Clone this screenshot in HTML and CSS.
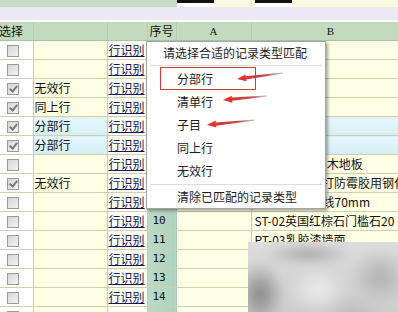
FILE: index.html
```html
<!DOCTYPE html>
<html lang="zh-CN">
<head>
    <meta charset="UTF-8">
    <meta name="viewport" content="width=device-width, initial-scale=1.0">
    <title>记录类型匹配</title>
    <link rel="stylesheet" href="styles.css">
</head>
<body>
    <div class="topbar">
        <div class="tb-green"></div>
        <div class="tb-yellow">
            <span class="tb-box"></span>
            <span class="tb-gap"></span>
            <span class="tb-box"></span>
        </div>
    </div>
    <div class="toolbar"></div>

    <table class="grid">
        <colgroup>
            <col class="c-sel"><col class="c-type"><col class="c-link"><col class="c-no"><col class="c-a"><col class="c-b">
        </colgroup>
        <thead>
            <tr><th class="h-sel">选择</th><th></th><th></th><th>序号</th><th class="h-a">A</th><th class="h-b">B</th></tr>
        </thead>
        <tbody>
            <tr><td class="sel"><span class="cb"></span></td><td class="type"></td><td class="link"><a href="#">行识别</a></td><td class="no">1</td><td class="a"></td><td class="b"></td></tr>
            <tr><td class="sel"><span class="cb"></span></td><td class="type"></td><td class="link"><a href="#">行识别</a></td><td class="no">2</td><td class="a"></td><td class="b"></td></tr>
            <tr><td class="sel"><span class="cb on"></span></td><td class="type">无效行</td><td class="link"><a href="#">行识别</a></td><td class="no">3</td><td class="a"></td><td class="b"></td></tr>
            <tr><td class="sel"><span class="cb on"></span></td><td class="type">同上行</td><td class="link"><a href="#">行识别</a></td><td class="no">4</td><td class="a"></td><td class="b"></td></tr>
            <tr class="part"><td class="sel"><span class="cb on"></span></td><td class="type">分部行</td><td class="link"><a href="#">行识别</a></td><td class="no">5</td><td class="a"></td><td class="b"></td></tr>
            <tr class="part"><td class="sel"><span class="cb on"></span></td><td class="type">分部行</td><td class="link"><a href="#">行识别</a></td><td class="no">6</td><td class="a"></td><td class="b"></td></tr>
            <tr><td class="sel"><span class="cb"></span></td><td class="type"></td><td class="link"><a href="#">行识别</a></td><td class="no">7</td><td class="a"></td><td class="b">WD-01橡木实木地板</td></tr>
            <tr><td class="sel"><span class="cb on"></span></td><td class="type">无效行</td><td class="link"><a href="#">行识别</a></td><td class="no">8</td><td class="a"></td><td class="b">GL-01淋浴间打防霉胶用钢化玻璃</td></tr>
            <tr><td class="sel"><span class="cb"></span></td><td class="type"></td><td class="link"><a href="#">行识别</a></td><td class="no">9</td><td class="a"></td><td class="b">SK-01木踢脚线70mm</td></tr>
            <tr><td class="sel"><span class="cb"></span></td><td class="type"></td><td class="link"><a href="#">行识别</a></td><td class="no">10</td><td class="a"></td><td class="b">ST-02英国红棕石门槛石20</td></tr>
            <tr><td class="sel"><span class="cb"></span></td><td class="type"></td><td class="link"><a href="#">行识别</a></td><td class="no">11</td><td class="a"></td><td class="b">PT-03乳胶漆墙面</td></tr>
            <tr><td class="sel"><span class="cb"></span></td><td class="type"></td><td class="link"><a href="#">行识别</a></td><td class="no">12</td><td class="a"></td><td class="b"></td></tr>
            <tr><td class="sel"><span class="cb"></span></td><td class="type"></td><td class="link"><a href="#">行识别</a></td><td class="no">13</td><td class="a"></td><td class="b"></td></tr>
            <tr><td class="sel"><span class="cb"></span></td><td class="type"></td><td class="link"><a href="#">行识别</a></td><td class="no">14</td><td class="a"></td><td class="b"></td></tr>
            <tr><td class="sel"><span class="cb"></span></td><td class="type"></td><td class="link"></td><td class="no"></td><td class="a"></td><td class="b"></td></tr>
        </tbody>
    </table>

    <!-- popup menu -->
    <div class="menu">
        <div class="menu-title">请选择合适的记录类型匹配</div>
        <div class="menu-sep"></div>
        <div class="menu-item marked"><span class="mark-box"></span>分部行</div>
        <div class="menu-item">清单行</div>
        <div class="menu-item">子目</div>
        <div class="menu-item">同上行</div>
        <div class="menu-item">无效行</div>
        <div class="menu-sep"></div>
        <div class="menu-item last">清除已匹配的记录类型</div>
    </div>

    <svg class="arrows" width="398" height="312" viewBox="0 0 398 312">
        <defs>
            <linearGradient id="shaft" x1="0" y1="0" x2="1" y2="0">
                <stop offset="0" stop-color="#e0302a"/>
                <stop offset="0.55" stop-color="#c44a48"/>
                <stop offset="1" stop-color="#8c8c8c" stop-opacity="0.5"/>
            </linearGradient>
        </defs>
        <polygon points="237,79 246.4,81.3 245.5,74.4" fill="#e3302a"/>
        <polygon points="245.7,76.2 282.9,72.5 283.1,73.5 246.1,79.4" fill="url(#shaft)"/>
        <polygon points="223,100 232.3,102.7 231.7,95.7" fill="#e3302a"/>
        <polygon points="231.9,97.6 266.9,95.5 267.1,96.5 232.1,100.8" fill="url(#shaft)"/>
        <polygon points="207,125 216.4,127.6 215.6,120.6" fill="#e3302a"/>
        <polygon points="215.8,122.5 254.9,119.5 255.1,120.5 216.2,125.7" fill="url(#shaft)"/>
    </svg>

    <div class="smudge"><div class="smudge-in"></div></div>
</body>
</html>
```

FILE: styles.css
```css
body{
    margin: 0;
    width: 398px;
    height: 312px;
    overflow: hidden;
    position: relative;
    background: #ffffe8;
    font-family: "Noto Sans CJK SC", "DejaVu Sans", sans-serif;
    font-size: 12px;
    color: #111;
}

/* top strip */
.topbar{
    display: flex;
    height: 7px;
}
.tb-green{
    width: 177px;
    background: #c6dcc2;
}
.tb-yellow{
    flex: 1;
    display: flex;
    background: #fbf8e2;
}
.tb-box{
    width: 37px;
    border-top: 3px solid #111;
    background: #fff;
}
.tb-gap{
    width: 41px;
}
.toolbar{
    height: 13px;
    background: #ece9f3;
    border-bottom: 2px solid #fbfbfd;
}

/* grid */
.grid{
    border-collapse: collapse;
    table-layout: fixed;
    width: 410px;
}
.c-sel{ width: 33px; }
.c-type{ width: 74px; }
.c-link{ width: 40px; }
.c-no{ width: 29px; }
.c-a{ width: 75px; }
.c-b{ width: 159px; }

.grid th{
    height: 18px;
    padding: 0;
    background: #c2dabe;
    font-weight: normal;
    line-height: 18px;
    border-right: 1px solid #b4ceb0;
    border-bottom: 1px solid #a9c4a5;
    white-space: nowrap;
    overflow: hidden;
}
.grid th.h-sel{
    text-align: left;
    text-indent: -1px;
}
.grid th.h-a, .grid th.h-b{
    font-family: "Liberation Serif", serif;
    font-size: 11px;
}
.grid td{
    height: 18px;
    padding: 0;
    line-height: 18px;
    border-bottom: 1px solid #cfcfae;
    border-right: 1px solid #c9c9b4;
    white-space: nowrap;
    overflow: hidden;
}
.grid td.sel{
    background: #ffffff;
    padding-left: 7px;
}
.grid td.type{
    background: #ffffe4;
    padding-left: 1px;
}
.grid td.link{
    background: #fffff4;
    padding-left: 1px;
}
.grid td.link a{
    color: #14145e;
    text-decoration: underline;
}
.grid td.no{
    background: linear-gradient(90deg, #bcdac8, #afd3be);
    padding-left: 5px;
    font-family: "DejaVu Sans Mono", monospace;
    font-size: 11px;
    border-right-color: #a8c8b4;
}
.grid td.a{
    background: #ffffe6;
}
.grid td.b{
    background: #ffffe6;
    padding-left: 3px;
}
.grid tr.part td.type,
.grid tr.part td.a,
.grid tr.part td.b{
    background: linear-gradient(180deg, #e6f7fc, #d4eff9);
}

/* checkbox */
.cb{
    display: inline-block;
    position: relative;
    width: 10px;
    height: 10px;
    margin-top: 4px;
    vertical-align: top;
    border: 1px solid #9a9a9a;
    background: linear-gradient(135deg, #d6d6d6, #f4f4f4);
}
.cb.on::after{
    content: "";
    position: absolute;
    left: 3px;
    top: 0px;
    width: 3px;
    height: 6px;
    border-right: 2px solid #7a7a7a;
    border-bottom: 2px solid #7a7a7a;
    transform: rotate(40deg);
}

/* popup menu */
.menu{
    position: absolute;
    left: 146px;
    top: 41px;
    width: 178px;
    padding: 1px 0 0;
    background: #fff;
    border: 1px solid #a3a3a3;
    box-shadow: 2px 2px 3px rgba(0, 0, 0, 0.35);
    color: #1c1c1c;
}
.menu-title{
    height: 20px;
    line-height: 20px;
    padding-left: 16px;
}
.menu-sep{
    height: 1px;
    margin: 2px 3px 1px 3px;
    background: #dcdcdc;
}
.menu-item{
    position: relative;
    height: 23px;
    line-height: 23px;
    padding-left: 30px;
}
.menu-item.last{
    height: 22px;
    line-height: 22px;
}
.mark-box{
    position: absolute;
    left: 13px;
    top: 0;
    width: 94px;
    height: 21px;
    border: 1px solid #d0383a;
}

.arrows{
    position: absolute;
    left: 0;
    top: 0;
    pointer-events: none;
}

/* blurred patch over lower right */
.smudge{
    position: absolute;
    left: 248px;
    top: 242px;
    width: 150px;
    height: 70px;
    overflow: hidden;
    background: #d0d0d0;
}
.smudge-in{
    position: absolute;
    left: -10px;
    top: -10px;
    right: -10px;
    bottom: -10px;
    filter: blur(5px);
    background:
        radial-gradient(ellipse 30px 22px at 80px 58px, #eeeeee, rgba(238,238,238,0)),
        radial-gradient(ellipse 24px 32px at 22px 62px, #858585, rgba(133,133,133,0)),
        radial-gradient(ellipse 45px 10px at 70px 22px, #a0a0a0, rgba(160,160,160,0)),
        radial-gradient(ellipse 30px 28px at 142px 45px, #b0b0b0, rgba(176,176,176,0)),
        radial-gradient(ellipse 30px 20px at 115px 82px, #bdbdbd, rgba(189,189,189,0)),
        linear-gradient(180deg, #dedede, #cbcbcb);
}
```
